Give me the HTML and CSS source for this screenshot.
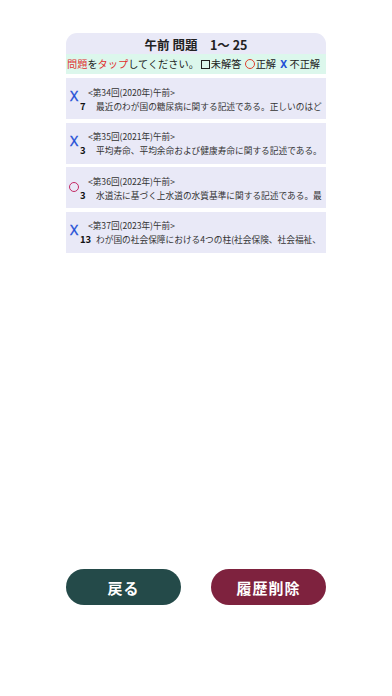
FILE: index.html
```html
<!DOCTYPE html>
<html lang="ja">
<head>
    <meta charset="UTF-8">
    <meta name="viewport" content="width=device-width, initial-scale=1.0">
    <title>午前 問題</title>
    <link rel="stylesheet" href="styles.css">
</head>
<body>
    <div class="page">
        <div class="panel">
            <div class="title">午前 問題　1〜 25</div>
            <div class="legend">
                <span class="red">問題</span>を<span class="red">タップ</span>してください。<span class="box"></span>未解答 <span class="ring"></span>正解 <span class="cross">X</span> 不正解
            </div>
            <div class="list">
                <div class="row">
                    <span class="mark cross">X</span>
                    <div class="body">
                        <div class="sub">&lt;第34回(2020年)午前&gt;</div>
                        <div class="line"><b>7</b><span>最近のわが国の糖尿病に関する記述である。正しいのはど</span></div>
                    </div>
                </div>
                <div class="row">
                    <span class="mark cross">X</span>
                    <div class="body">
                        <div class="sub">&lt;第35回(2021年)午前&gt;</div>
                        <div class="line"><b>3</b><span>平均寿命、平均余命および健康寿命に関する記述である。</span></div>
                    </div>
                </div>
                <div class="row">
                    <span class="mark"><span class="circle"></span></span>
                    <div class="body">
                        <div class="sub">&lt;第36回(2022年)午前&gt;</div>
                        <div class="line"><b>3</b><span>水道法に基づく上水道の水質基準に関する記述である。最</span></div>
                    </div>
                </div>
                <div class="row">
                    <span class="mark cross">X</span>
                    <div class="body">
                        <div class="sub">&lt;第37回(2023年)午前&gt;</div>
                        <div class="line"><b>13</b><span>わが国の社会保障における4つの柱(社会保険、社会福祉、</span></div>
                    </div>
                </div>
            </div>
        </div>

        <div class="buttons">
            <button class="btn back">戻る</button>
            <button class="btn clear">履歴削除</button>
        </div>
    </div>
</body>
</html>
```

FILE: styles.css
```css
/* Global */
* {
    box-sizing: border-box;
    margin: 0;
    padding: 0;
}
body {
    font-family: "Noto Sans CJK JP", "Noto Sans", sans-serif;
    background: #ffffff;
    color: #222;
}
.page {
    height: 696px;
    display: flex;
    flex-direction: column;
    align-items: center;
    padding: 33px 0 91px;
}

/* Question panel */
.panel {
    width: 260px;
}
.title {
    height: 21px;
    line-height: 23px;
    text-align: center;
    font-size: 12.5px;
    font-weight: bold;
    background: #e9e9f7;
    border-radius: 11px 11px 0 0;
}
.legend {
    height: 20px;
    line-height: 20px;
    font-size: 10.2px;
    white-space: nowrap;
    padding-left: 1px;
    background: #dcf7ec;
    color: #222;
    overflow: hidden;
}
.red {
    color: #e0302c;
}
.box {
    display: inline-block;
    width: 9px;
    height: 9px;
    border: 1px solid #222;
    margin: 0 1px 0 2px;
    vertical-align: -1px;
}
.ring {
    display: inline-block;
    width: 10px;
    height: 10px;
    border: 1.2px solid #e0402c;
    border-radius: 50%;
    margin: 0 1px 0 1px;
    vertical-align: -1px;
}
.cross {
    color: #1f4fd6;
    font-family: "Noto Sans", sans-serif;
    font-weight: bold;
    margin-left: 2px;
}

/* Rows */
.list {
    display: flex;
    flex-direction: column;
    gap: 3.5px;
    margin-top: 4px;
}
.row {
    height: 41px;
    display: flex;
    align-items: center;
    background: #e9e9f7;
    overflow: hidden;
    padding-left: 2px;
}
.mark {
    width: 12px;
    flex-shrink: 0;
    display: flex;
    justify-content: center;
    margin-top: -6px;
}
.row .cross {
    font-size: 14px;
    font-weight: normal;
    -webkit-text-stroke: 0.3px #1f4fd6;
    margin-left: 0;
}
.circle {
    display: block;
    width: 10px;
    height: 10px;
    border: 1.3px solid #c42a64;
    border-radius: 50%;
    margin-top: 4px;
}
.body {
    flex: 1;
    min-width: 0;
    padding-top: 2px;
}
.sub {
    font-size: 8.6px;
    line-height: 13px;
    padding-left: 8px;
    color: #333;
}
.line {
    display: flex;
    align-items: baseline;
    white-space: nowrap;
    overflow: hidden;
    font-size: 8.7px;
    line-height: 15px;
    color: #333;
}
.line b {
    flex-shrink: 0;
    width: 16px;
    font-size: 9.5px;
    color: #111;
}

/* Bottom buttons */
.buttons {
    margin-top: auto;
    display: flex;
    gap: 30px;
}
.btn {
    width: 115px;
    height: 36px;
    border: none;
    border-radius: 18px;
    color: #ffffff;
    font-family: "Noto Sans CJK JP", sans-serif;
    font-size: 15px;
    font-weight: bold;
    letter-spacing: 1px;
}
.back {
    background: #244a49;
}
.clear {
    background: #7e223e;
}
```
